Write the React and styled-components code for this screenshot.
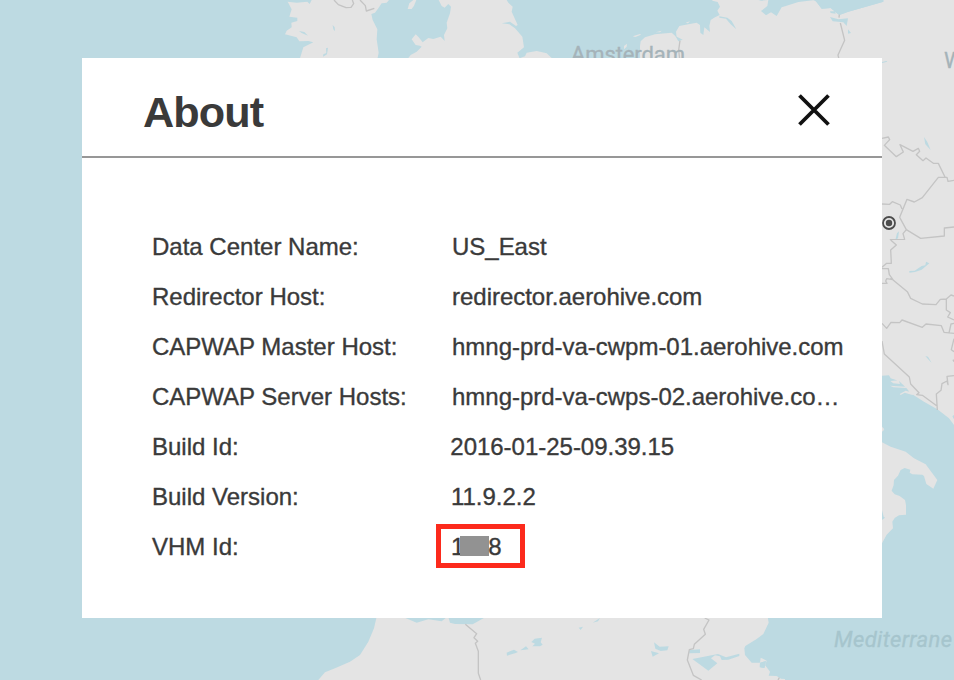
import React from "react";
import styled, { createGlobalStyle } from "styled-components";

const GlobalStyle = createGlobalStyle`
  * { box-sizing: border-box; }
  body { margin: 0; background: #bddae2; overflow: hidden; }
`;

const Screen = styled.main`
  position: relative;
  width: 954px;
  height: 680px;
  padding: 58px 72px 62px 82px;
  overflow: hidden;
  font-family: "Liberation Sans", Arial, sans-serif;
  color: #3a3a3a;
`;

const MapSvg = styled.svg`
  position: absolute;
  inset: 0;
  display: block;
  .land { fill: #e4e4e4; }
  .water { fill: #bddae2; }
  .border { fill: none; stroke: #c4c4c4; stroke-width: 4; stroke-linejoin: round; }
`;

const MapLabel = styled.text`
  font-family: Roboto, sans-serif;
  font-size: ${(p) => p.$size}px;
  font-style: ${(p) => (p.$sea ? "italic" : "normal")};
  fill: ${(p) => (p.$sea ? "#a6c5cd" : "#a5b3b9")};
  stroke: ${(p) => (p.$sea ? "#a6c5cd" : "#a5b3b9")};
  stroke-width: 0.3px;
`;

const Dialog = styled.section`
  position: relative;
  display: flex;
  flex-direction: column;
  width: 800px;
  height: 560px;
  background: #fff;
`;

const Header = styled.header`
  display: flex;
  justify-content: space-between;
  align-items: flex-start;
  height: 100px;
  padding: 29px 50px 0 61px;
  border-bottom: 2px solid #979797;
`;

const Title = styled.h1`
  margin: 0;
  font-size: 43.2px;
  line-height: 50px;
  font-weight: 700;
  letter-spacing: -0.9px;
`;

const CloseButton = styled.button`
  display: flex;
  margin: 6px 0 0;
  padding: 0;
  border: 0;
  background: none;
`;

const Details = styled.dl`
  display: flex;
  flex-direction: column;
  margin: 0;
  padding: 64px 36px 0 70px;
`;

const Row = styled.div`
  display: grid;
  grid-template-columns: 300px 1fr;
  height: 50px;
  line-height: 50px;
  font-size: 24px;
  white-space: nowrap;
`;

const Label = styled.dt`
  -webkit-text-stroke: 0.35px #3a3a3a;
`;

const Value = styled.dd`
  margin: 0 0 0 ${(p) => p.$shift || 0}px;
  letter-spacing: -0.02px;
  -webkit-text-stroke: 0.35px #3a3a3a;
`;

const Highlight = styled.span`
  display: flex;
  align-items: center;
  width: 89px;
  height: 44px;
  margin: 2px 0 0 -15px;
  padding: 2px 0 0 10px;
  border: 5px solid #fc2a1c;
`;

const Redaction = styled.span`
  width: 29px;
  height: 20px;
  margin: 0 -1px 3px -4px;
  background: #929292;
`;

const rows = [
  { label: "Data Center Name:", value: "US_East" },
  { label: "Redirector Host:", value: "redirector.aerohive.com" },
  { label: "CAPWAP Master Host:", value: "hmng-prd-va-cwpm-01.aerohive.com" },
  { label: "CAPWAP Server Hosts:", value: "hmng-prd-va-cwps-02.aerohive.co…" },
  { label: "Build Id:", value: "2016-01-25-09.39.15", shift: -1.7 },
  { label: "Build Version:", value: "11.9.2.2", shift: -1 },
];

const tile = (x, y) => `translate(${x} ${y}) scale(.333333)`;

function EuropeMap() {
  return (
    <MapSvg width="954" height="680" viewBox="0 0 954 680" aria-hidden="true">
      <rect className="water" width="954" height="680" />
      <rect className="land" x="882" y="20" width="72" height="225" />
      <g transform={tile(270, 0)}>
        <path className="land" d="M53 5L80 8L112 5L119 12L125 0H357L350 8L335 10L325 25L315 38L304 42L308 60L322 88L320 118L326 158L322 178H89L100 142L130 127L115 123L88 124L80 112L45 103L50 92L65 82L64 68L82 63L82 53L58 50L65 28Z" />
        <path className="land" d="M413 27L418 10L430 0H439L432 17L425 27ZM506 0L515 18L524 23L535 12L543 20L540 40L530 68L532 85L522 105L524 123L512 110L490 117L475 114L458 127L445 110L437 103L425 118L437 135L450 137L455 140L440 155L422 165L412 178H750L742 158L762 142L757 110L735 85L718 73L695 70L720 65L738 78L743 75L725 35L728 20L715 8L710 0ZM740 178L765 169L770 158L800 153L830 160L849 178Z" />
        <path className="water" d="M87 93L103 96L114 107L95 99ZM188 75L194 82L195 94L190 88ZM168 145L174 143L171 163L159 170L160 163L169 159Z" />
        <path className="border" d="M192 0L205 14L228 23L243 22L251 11L247 0M270 0L286 17L289 33L313 25" />
      </g>
      <g transform={tile(560, 0)}>
        <path className="land" d="M240 180V138L242 124L255 112L285 103L335 98L350 112L348 95L358 78L385 73L410 68L420 75L421 98L430 105L433 82L450 96L448 78L452 60L465 52L479 45L472 32L480 20L473 6L457 2V0H625L622 18L603 33L618 46L633 37L650 48L665 22L680 17L715 6L765 0L785 26L812 24L830 39L838 45L865 35L970 5V0H1182V180ZM218 109L240 102L243 104L226 111ZM192 138L201 131L200 140L192 148ZM377 68L390 64L384 70ZM287 97L305 92L300 97Z" />
        <path className="water" d="M478 49L502 53L515 63L529 88L512 73L498 56L478 53ZM595 0H623L604 2ZM760 0H782L775 8ZM785 0H970V5L865 35L838 45L830 39L812 24L785 26L765 0ZM810 34L825 34L827 41L812 39ZM810 51L835 58L864 55L860 78L850 67L818 64ZM864 88L873 99L864 101ZM346 108L368 119L355 124Z" />
        <path className="border" d="M360 122L356 150L359 178M838 44L837 53M841 69L854 121L834 165L837 178" />
      </g>
      <MapLabel $size={22} x="571" y="62" textLength="114">Amsterdam</MapLabel>
      <MapLabel $size={22} x="944" y="68">W</MapLabel>
      <g transform={tile(874, 50)}>
        <path className="water" d="M24 36L37 33L40 35L24 39ZM150 261L160 276L170 300L154 283ZM75 544L72 565L64 570L69 550Z" />
        <path className="border" d="M24 265L43 261L47 269L31 286L67 320L88 306L78 284L117 304L133 295L137 304L127 314L147 332L156 324L178 340H193L213 381M24 462L47 463L55 455L79 465L84 477M240 391L222 394L219 382H193L145 443L121 456L99 448L77 502L97 539L140 565L211 558V534L240 531M97 539L87 551L92 568L49 569L68 587L49 600" />
      </g>
      <g transform={tile(874, 240)}>
        <path className="land" d="M24 0H240V555L225 535L190 508L150 485L110 460L95 442L75 423L50 415L45 406L24 407ZM49 423L74 421L78 432L58 430ZM48 437L94 440L96 444L58 442ZM77 462L95 452L125 460L115 465L92 458L80 465Z" />
        <path className="water" d="M106 93L122 92L143 78L154 76L156 65L166 70L143 89L123 96L106 98ZM154 348L162 350L173 368L168 364ZM240 525L235 529L240 538Z" />
        <path className="land" d="M24 560L31 568L24 574Z" />
        <path className="border" d="M50 0L67 15L50 30L52 70H38L24 82M24 86H43L46 104L57 119L38 116L35 123L39 130H24M50 114L100 155L110 175L145 192L186 194L199 178L217 177L231 165L240 168M217 177V210L229 218L221 231L240 240M24 250L38 265L51 247L77 248L84 240L145 262L156 252L202 257L210 277L240 280M225 279L231 252L240 250M24 303L31 342L106 411L110 432L135 458L128 464L145 466L190 499M190 510L187 462L201 451L204 431L219 423L222 434L219 409L240 407M240 296L232 329L240 335M237 359L240 365" />
      </g>
      <g transform={tile(874, 430)}>
        <path className="land" d="M24 0H30L24 5ZM24 37L50 50L95 65L120 85L155 103L190 150L178 176L157 162L150 138L145 134L115 133L107 128L109 119L92 114L80 120L72 137L60 150L59 165L53 182L62 193L77 198L93 210L96 225V254L75 256L62 264L55 275L57 295L38 314L24 340Z" />
        <path className="water" d="M24 240L29 260L33 263L24 270Z" />
      </g>
      <g transform={tile(300, 610)}>
        <path className="land" d="M230 20L222 55L205 95L180 135L150 155L105 175L75 187L55 210H990V20Z" />
        <path className="water" d="M311 22L350 38L385 28L425 34L440 22ZM445 22L450 38L465 42L518 43L553 23ZM620 128L642 119L654 126L645 130L621 137ZM661 121L678 109L686 118ZM694 96L704 86L726 83L722 97L728 104L720 109H697L705 101ZM836 53L849 50L842 60ZM878 38L900 24L894 34Z" />
        <path className="border" d="M496 43L530 71L522 83L533 94L526 100L535 124V190L542 210" />
      </g>
      <g transform={tile(620, 610)}>
        <path className="land" d="M0 20H443L446 38L430 72L410 87L376 108L373 115L375 135L395 158H420L419 172L433 174L440 152L422 143L420 158L438 153L435 165L450 185L446 197L470 198L483 206L495 207V210H0Z" />
        <path className="water" d="M102 97L119 110L146 109L142 121L122 123L106 116ZM93 123L117 130L98 140ZM208 120L240 118V129L208 130ZM217 147L294 132L318 142L358 131V138L325 149L305 150L300 139L285 136L273 145L292 160L265 182ZM421 158L438 154L433 174L420 171Z" />
        <path className="border" d="M254 24L267 30L251 58L256 73L223 103L220 116L208 119L202 150L220 196L245 210M478 203L474 210" />
      </g>
      <MapLabel $size={22} $sea x="834" y="647" textLength="118">
        Mediterrane
      </MapLabel>
      <circle cx="889" cy="223" r="6" fill="#e4e4e4" stroke="#4b4b4b" strokeWidth="1.8" />
      <circle cx="889" cy="223" r="3.2" fill="#4b4b4b" />
    </MapSvg>
  );
}

export default function App() {
  return (
    <Screen>
      <GlobalStyle />
      <EuropeMap />
      <Dialog role="dialog" aria-labelledby="about-title">
        <Header>
          <Title id="about-title">About</Title>
          <CloseButton aria-label="Close">
            <svg width="36" height="36" viewBox="0 0 36 36">
              <path d="M3.5 2.5L32.5 31.5M32.5 2.5L3.5 31.5" stroke="#111" strokeWidth="3.8" />
            </svg>
          </CloseButton>
        </Header>
        <Details>
          {rows.map((row) => (
            <Row key={row.label}>
              <Label>{row.label}</Label>
              <Value $shift={row.shift}>{row.value}</Value>
            </Row>
          ))}
          <Row>
            <Label>VHM Id:</Label>
            <Value $shift={-1}>
              <Highlight>
                <span>1</span>
                <Redaction />
                <span>8</span>
              </Highlight>
            </Value>
          </Row>
        </Details>
      </Dialog>
    </Screen>
  );
}
